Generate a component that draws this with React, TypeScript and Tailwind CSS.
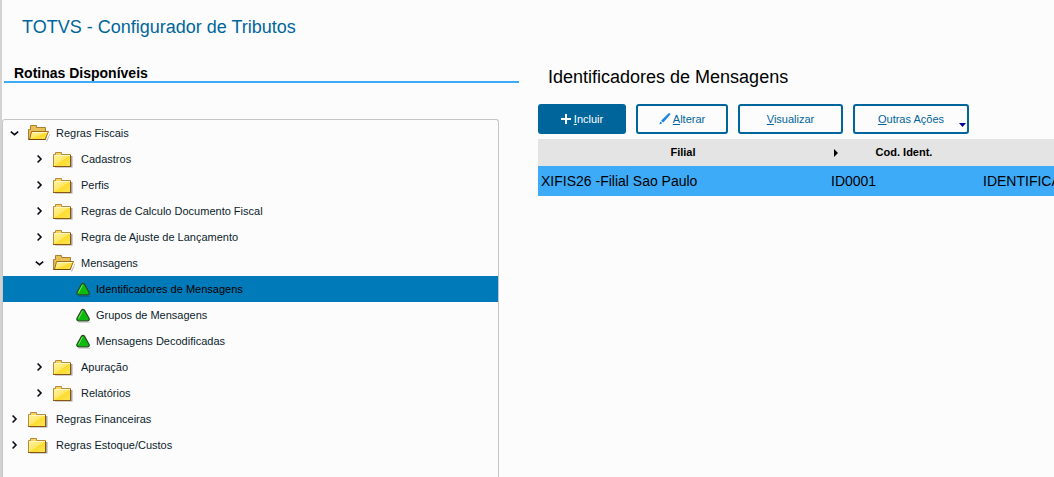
import { useState } from 'react'

type TreeNode = {
  label: string
  children?: TreeNode[]
}

const menu: TreeNode[] = [
  {
    label: 'Regras Fiscais',
    children: [
      { label: 'Cadastros', children: [] },
      { label: 'Perfis', children: [] },
      { label: 'Regras de Calculo Documento Fiscal', children: [] },
      { label: 'Regra de Ajuste de Lançamento', children: [] },
      {
        label: 'Mensagens',
        children: [
          { label: 'Identificadores de Mensagens' },
          { label: 'Grupos de Mensagens' },
          { label: 'Mensagens Decodificadas' },
        ],
      },
      { label: 'Apuração', children: [] },
      { label: 'Relatórios', children: [] },
    ],
  },
  { label: 'Regras Financeiras', children: [] },
  { label: 'Regras Estoque/Custos', children: [] },
]

const indents = ['pl-[7px]', 'pl-[32px]', 'pl-[57px]']

const Chevron = ({ open }: { open: boolean }) => (
  <svg viewBox="0 0 10 10" className="w-[10px] h-[10px] mr-2 shrink-0" fill="none" stroke="#0a0a14" strokeWidth="1.6">
    {open ? <path d="M.8 3.7 4.500 6.700 8.200 3.700" /> : <path d="M2.600 1.500 6 5 2.600 8.500" />}
  </svg>
)

const Folder = ({ open }: { open: boolean }) => (
  <svg viewBox="0 -1 22 18" className="w-[22px] h-[18px] mr-[6px] shrink-0">
    <defs>
      <linearGradient id="folder" x1="0" y1="0" x2="1" y2="1">
        <stop offset="0" stopColor="#fff3a0" />
        <stop offset="0.5" stopColor="#fde766" />
        <stop offset="0.52" stopColor="#fddc2c" />
        <stop offset="1" stopColor="#fce455" />
      </linearGradient>
      <filter id="soft">
        <feGaussianBlur stdDeviation="0.7" />
      </filter>
    </defs>
    {open ? (
      <>
        <path d="M2 16.500h16l4-8v1l-3 7z" fill="#000" opacity="0.35" filter="url(#soft)" />
        <path d="M.5 14.500v-10h2v-4h6v2h9v4h2L17.500 14.500z" fill="#e8bf52" stroke="#ac7f32" />
        <path d="M1.500 14.500 3.500 6.500h17l-3.500 8z" fill="url(#folder)" stroke="#a06c20" />
        <path d="M4.300 7.500h15" stroke="#fff8c4" />
        <path d="M.5 14.500H17.500" stroke="#7a4708" />
      </>
    ) : (
      <>
        <path d="M2 5h17.500v11.500H2z" fill="#000" opacity="0.35" filter="url(#soft)" />
        <path d="M.5 3.500H2.500v-2h6v2H17.500v12H.5z" fill="#f8d25a" stroke="#b98b40" />
        <path d="M1 4h16v11H1z" fill="url(#folder)" />
        <path d="M1 4.500h16" stroke="#fff8c4" />
        <path d="M0 15.500h18M17.500 4v11" stroke="#8d5512" />
      </>
    )}
  </svg>
)

const Leaf = () => (
  <svg viewBox="0 0 15 15" className="w-[15px] h-[15px] mr-[5px] shrink-0">
    <path d="M2 14h12l.8-1.500-.6 2H3z" fill="#000" opacity="0.3" />
    <path
      d="M5.700 1.900Q7 .7 8.300 1.900L13 10.200Q13.800 12.600 11.800 12.800H2.500Q.3 12.600 1 10.200z"
      fill="#0cbc0c"
      stroke="#2b4a24"
      strokeWidth="1.200"
      strokeLinejoin="round"
    />
    <path d="M6.400 3 2.500 10.600" stroke="#7ce26c" strokeWidth="1" />
  </svg>
)

type TreeProps = {
  nodes: TreeNode[]
  level?: number
  opened: string[]
  selected: string
  onPick: (node: TreeNode) => void
}

const Tree = ({ nodes, level = 0, opened, selected, onPick }: TreeProps) => (
  <ul>
    {nodes.map((node) => {
      const open = opened.includes(node.label)
      return (
        <li key={node.label}>
          <button
            type="button"
            onClick={() => onPick(node)}
            className={`flex w-full h-[26px] items-center text-left text-[11px] ${indents[level]} ${
              selected === node.label ? 'bg-[#007ab9] text-black' : 'text-[#0c1c2c]'
            }`}
          >
            {node.children ? (
              <>
                <Chevron open={open} />
                <Folder open={open} />
              </>
            ) : (
              <span className="pl-4">
                <Leaf />
              </span>
            )}
            {node.label}
          </button>
          {open && node.children && (
            <Tree nodes={node.children} level={level + 1} opened={opened} selected={selected} onPick={onPick} />
          )}
        </li>
      )
    })}
  </ul>
)

const outline = 'h-[30px] rounded-[3px] border-2 border-[#00659a] text-[#00659a] flex items-center justify-center'

const App = () => {
  const [opened, setOpened] = useState(['Regras Fiscais', 'Mensagens'])
  const [selected, setSelected] = useState('Identificadores de Mensagens')

  const pick = (node: TreeNode) => {
    if (!node.children) {
      setSelected(node.label)
      return
    }
    setOpened((list) =>
      list.includes(node.label) ? list.filter((l) => l !== node.label) : [...list, node.label]
    )
  }

  return (
    <div className="min-h-screen grid grid-cols-[517fr_535fr] bg-[#fcfcfc] border-l-2 border-[#d2d2d2] text-black font-['Liberation_Sans',Arial,sans-serif]">
      {/* Menu */}
      <aside className="min-w-0 flex flex-col">
        <h1 className="pl-5 pt-4 h-[63px] text-[18px] leading-[22px] text-[#00659a]">
          TOTVS - Configurador de Tributos
        </h1>
        <h2 className="ml-[2px] pl-[10px] h-5 border-b-2 border-[#3dabf8] text-[14px] leading-5 font-bold">
          Rotinas Disponíveis
        </h2>
        <nav className="mt-9 mr-5 flex-1 border border-b-0 border-[#c6c6c6] rounded-t-[3px]">
          <Tree nodes={menu} opened={opened} selected={selected} onPick={pick} />
        </nav>
      </aside>

      {/* Browse */}
      <main className="min-w-0 pl-[19px] pt-[66px]">
        <h2 className="pl-[10px] text-[18px] leading-[22px]">Identificadores de Mensagens</h2>
        <div className="mt-4 flex gap-[10px] text-[11px]">
          <button
            type="button"
            className="w-[88px] h-[30px] rounded-[3px] bg-[#00659a] text-white flex items-center justify-center gap-[2px]"
          >
            <svg viewBox="0 0 11 11" className="w-[11px] h-[11px]" stroke="#fff" strokeWidth="2">
              <path d="M5 0v10M0 5h10" />
            </svg>
            <span>
              <u>I</u>ncluir
            </span>
          </button>
          <button type="button" className={`w-[92px] gap-[2px] ${outline}`}>
            <svg viewBox="0 0 12 12" className="w-3 h-3" fill="#1c86e0">
              <path d="M9.600.2Q10.600-.2 11.500 1.300L4.300 9.600 2 7.800z" />
              <path d="M1.400 8.600 3.500 10.300.3 11.600z" />
            </svg>
            <span>
              <u>A</u>lterar
            </span>
          </button>
          <button type="button" className={`w-[105px] ${outline}`}>
            <span>
              <u>V</u>isualizar
            </span>
          </button>
          <button type="button" className={`relative w-[116px] ${outline}`}>
            <span>
              <u>O</u>utras Ações
            </span>
            <svg viewBox="0 0 7 4" className="absolute right-[1px] bottom-[5px] w-[7px] h-1" fill="#00009c">
              <path d="M0 0h7L3.500 4z" />
            </svg>
          </button>
        </div>

        <div className="mt-[5px] overflow-hidden">
          <table className="w-full min-w-[620px] table-fixed">
            <thead>
              <tr className="h-[27px] bg-[#e4e4e4] text-[11px]">
                <th className="w-[290px]">Filial</th>
                <th className="relative w-[152px]">
                  <svg viewBox="0 0 4 8" className="absolute left-[6px] top-[10px] w-1 h-2">
                    <path d="M0 0 4 4 0 8z" />
                  </svg>
                  Cod. Ident.
                </th>
                <th></th>
              </tr>
            </thead>
            <tbody>
              <tr className="h-[30px] bg-[#3dabf8] text-[14px]">
                <td className="pl-[3px]">XIFIS26 -Filial Sao Paulo</td>
                <td className="pl-[3px]">ID0001</td>
                <td className="pl-[3px]">IDENTIFICA</td>
              </tr>
            </tbody>
          </table>
        </div>
      </main>
    </div>
  )
}

export default App
